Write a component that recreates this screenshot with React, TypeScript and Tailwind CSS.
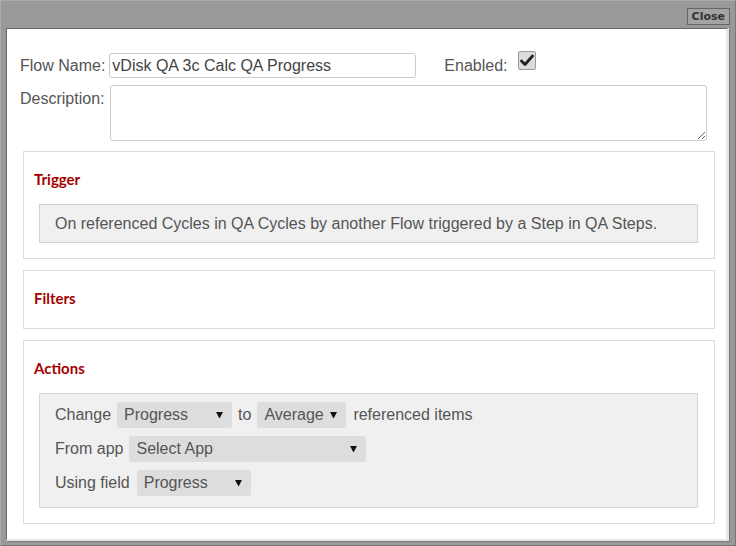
import React from "react";

function Arrow() {
  return (
    <svg width="7" height="8" viewBox="0 0 7 8" className="shrink-0">
      <polygon points="0,1 7,1 3.5,7.5" fill="#111" />
    </svg>
  );
}

function FakeSelect({ label, width }: { label: string; width: string }) {
  return (
    <div
      className={`${width} h-[26px] rounded-[3px] bg-[#dddddd] pl-[7px] pr-[9px] flex items-center justify-between text-[#555]`}
    >
      <span>{label}</span>
      <Arrow />
    </div>
  );
}

export default function App() {
  const font = { fontFamily: '"Liberation Sans", Arial, sans-serif' };
  const titleCls =
    "h-[20px] leading-[20px] text-[15px] font-bold text-[#a50000] [font-family:Lato,'Open_Sans',sans-serif]";
  return (
    <div
      className="w-[736px] h-[546px] bg-[#999999] flex flex-col border-t border-l border-t-[#aaaaaa] border-l-[#aaaaaa] border-r border-b border-r-[#777] border-b-[#777] box-border overflow-hidden"
      style={font}
    >
      <div className="h-[27px] shrink-0 flex justify-end items-start pt-[7px] pr-[5px]">
        <div className="h-[17px] px-[4px] border border-[#666] bg-[#a3a3a3] text-[#333] text-[11px] font-bold leading-[15px] [font-family:'DejaVu_Sans',sans-serif]">
          Close
        </div>
      </div>
      <div className="ml-[5px] w-[723px] h-[513px] shrink-0 box-border bg-white border-t border-l border-t-[#666] border-l-[#666] border-r-[3px] border-b-[2px] border-r-[#e6e6e6] border-b-[#e6e6e6] shadow-[1px_1px_0_#777] pl-[13px] pt-[24px] text-[16px] text-[#555]">
        <div className="flex items-center h-[25px]">
          <span className="leading-[24px]">Flow Name:</span>
          <input
            readOnly
            defaultValue="vDisk QA 3c Calc QA Progress"
            className="ml-[4px] w-[307px] h-[25px] border border-[#cccccc] rounded-[3px] pl-[2px] text-[16px] text-[#444] outline-none"
            style={font}
          />
          <span className="ml-[28px] leading-[24px]">Enabled:</span>
          <div className="ml-[10px] self-start -mt-[2px] w-[18px] h-[19px] rounded-[2px] border border-[#9a9a9a] bg-[#dcdcdc] flex items-center justify-center">
            <svg width="14" height="13" viewBox="0 0 14 13">
              <path d="M1.5 7 L5 10.5 L12.5 2" fill="none" stroke="#222" strokeWidth="2.8" strokeLinecap="round" strokeLinejoin="round" />
            </svg>
          </div>
        </div>
        <div className="flex items-start mt-[7px]">
          <span className="leading-[24px] pt-[2px]">Description:</span>
          <textarea
            readOnly
            className="block ml-[6px] w-[597px] h-[56px] border border-[#cccccc] rounded-[3px] outline-none"
          />
        </div>

        <div className="ml-[3px] w-[692px] mt-[10px] border border-[#dddddd] pl-[10px] pr-[16px] pt-[17px] pb-[15px]">
          <div className={titleCls}>Trigger</div>
          <div className="mt-[15px] ml-[5px] h-[39px] border border-[#d2d2d2] bg-[#f0f0f0] pl-[15px] flex items-center">
            On referenced Cycles in QA Cycles by another Flow triggered by a Step in QA Steps.
          </div>
        </div>

        <div className="ml-[3px] w-[692px] mt-[11px] border border-[#dddddd] pl-[10px] pr-[16px] pt-[17px] pb-[20px]">
          <div className={titleCls}>Filters</div>
        </div>

        <div className="ml-[3px] w-[692px] mt-[11px] border border-[#dddddd] pl-[10px] pr-[16px] pt-[17px] pb-[15px]">
          <div className={titleCls}>Actions</div>
          <div className="mt-[15px] ml-[5px] border border-[#d6d6d6] bg-[#f0f0f0] pl-[15px] pt-[8px] pb-[11px] flex flex-col gap-[8px]">
            <div className="flex items-center h-[26px] gap-[6px]">
              <span>Change</span>
              <FakeSelect label="Progress" width="w-[115px]" />
              <span>to</span>
              <FakeSelect label="Average" width="w-[89px]" />
              <span className="ml-[1px]">referenced items</span>
            </div>
            <div className="flex items-center h-[26px] gap-[6px]">
              <span>From app</span>
              <FakeSelect label="Select App" width="w-[237px]" />
            </div>
            <div className="flex items-center h-[26px] gap-[7px]">
              <span>Using field</span>
              <FakeSelect label="Progress" width="w-[114px]" />
            </div>
          </div>
        </div>
      </div>
    </div>
  );
}
